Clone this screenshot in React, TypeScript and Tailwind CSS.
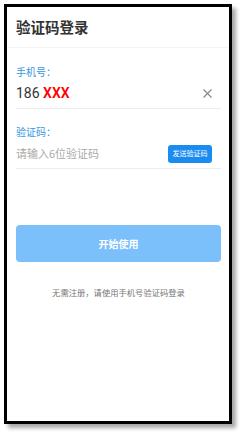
export default function App() {
  const cjk = { fontFamily: '"Noto Sans CJK SC", "Noto Sans", sans-serif' };
  return (
    <div className="w-[243px] h-[435px] bg-white pt-[4px] pl-[4px]" style={cjk}>
      <div className="w-[228px] h-[420px] border-[3px] border-black bg-white shadow-[4px_4px_4px_rgba(0,0,0,0.35)] flex flex-col">
        <div className="h-[41px] border-b border-[#f4f4f4] flex items-center pl-[9px]">
          <h1 className="text-[14.5px] font-bold text-[#333] leading-none">验证码登录</h1>
        </div>

        <div className="pl-[9px] pr-[8px] flex flex-col">
          <p className="mt-[17px] h-[14px] text-[10px] leading-[14px] text-[#3a97dc]">手机号：</p>
          <div className="h-[30px] border-b border-[#ececec] flex items-center justify-between">
            <span className="text-[14px] text-[#333]" style={{ fontFamily: 'Roboto, "Noto Sans", sans-serif' }}>
              186 <span className="text-[#ff0000] font-semibold">XXX</span>
            </span>
            <svg width="9" height="9" viewBox="0 0 9 9" className="mr-[9px]">
              <path d="M0.5 0.5 L8.5 8.5 M8.5 0.5 L0.5 8.5" stroke="#8a8a8a" strokeWidth="1.2" fill="none" />
            </svg>
          </div>

          <p className="mt-[16px] h-[14px] text-[10px] leading-[14px] text-[#3a97dc]">验证码：</p>
          <div className="h-[30px] border-b border-[#ececec] flex items-center justify-between">
            <span className="text-[11px] text-[#aaa]">请输入6位验证码</span>
            <button className="w-[44px] h-[18px] rounded-[3px] bg-[#1a8cf0] text-white text-[7px] leading-none mr-[9px]">
              发送验证码
            </button>
          </div>

          <button className="mt-[56px] h-[37px] rounded-[4px] bg-[#7cc0fb] text-white text-[10px] font-bold">
            开始使用
          </button>

          <p className="mt-[24px] text-center text-[8.3px] leading-[12px] text-[#777]">
            无需注册，请使用手机号验证码登录
          </p>
        </div>
      </div>
    </div>
  );
}
